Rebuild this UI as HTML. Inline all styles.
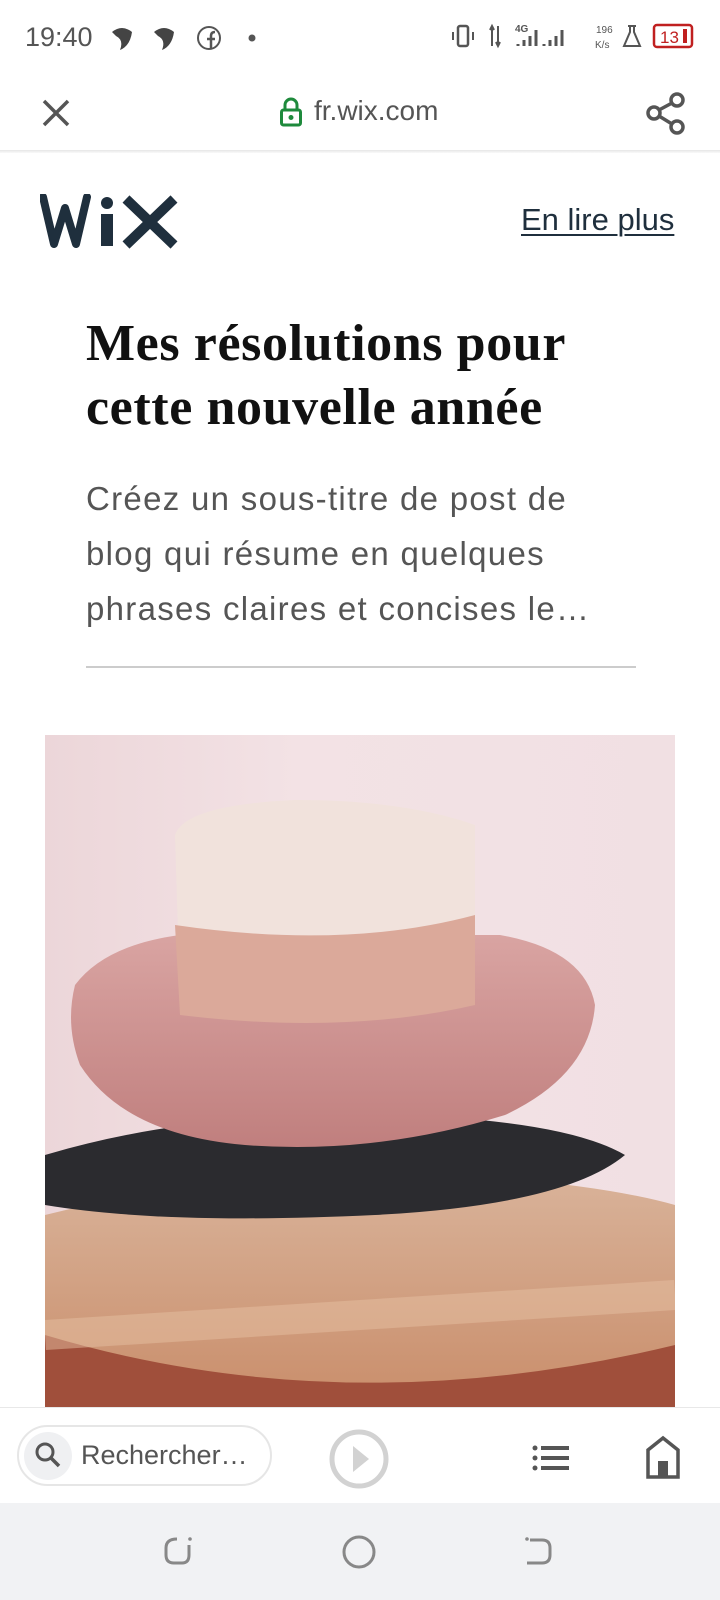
<!DOCTYPE html>
<html><head><meta charset="utf-8"><style>
*{margin:0;padding:0;box-sizing:border-box}
body{width:720px;height:1600px;background:#fff;position:relative;overflow:hidden;font-family:"Liberation Sans",sans-serif}
.abs{position:absolute}
</style></head><body>
<!-- status bar -->
<div class="abs" style="left:25px;top:22px;font-size:27px;color:#555">19:40</div>
<svg class="abs" style="left:108px;top:24px" width="150" height="28" viewBox="0 0 150 28">
<path d="M4 8 Q14 0 24 8 Q22 22 12 26 Q16 16 8 12Z" fill="#444"/>
<path d="M46 8 Q56 0 66 8 Q64 22 54 26 Q58 16 50 12Z" fill="#444"/>
<circle cx="101" cy="14" r="11" fill="none" stroke="#555" stroke-width="2"/>
<path d="M103 25 V12 Q103 8 107 8 M99 15 H107" stroke="#555" stroke-width="2.5" fill="none"/>
<circle cx="144" cy="14" r="3.5" fill="#555"/>
</svg>
<svg class="abs" style="left:450px;top:22px" width="250" height="30" viewBox="0 0 250 30">
<rect x="8" y="4" width="10" height="20" rx="2" fill="none" stroke="#555" stroke-width="2.5"/>
<path d="M3 10v8M23 10v8" stroke="#555" stroke-width="2"/>
<path d="M42 4v20M40 8l2-4 2 4M48 4v20M46 20l2 4 2-4" stroke="#555" stroke-width="2"/>
<text x="65" y="10" font-size="10" fill="#555" font-weight="bold">4G</text>
<path d="M68 24v-2M74 24v-6M80 24v-10M86 24v-16" stroke="#555" stroke-width="3"/>
<path d="M94 24v-2M100 24v-6M106 24v-10M112 24v-16" stroke="#555" stroke-width="3"/>
<text x="146" y="11" font-size="10" fill="#555">196</text><text x="145" y="26" font-size="10" fill="#555">K/s</text>
<path d="M178 4h8M180 4v6l-6 14h16l-6-14v-6" fill="none" stroke="#555" stroke-width="2"/>
<rect x="204" y="3" width="38" height="22" rx="3" fill="none" stroke="#c02020" stroke-width="2.5"/>
<text x="210" y="21" font-size="17" fill="#c02020">13</text><rect x="233" y="7" width="4" height="14" fill="#c02020"/>
</svg>
<!-- toolbar -->
<svg class="abs" style="left:40px;top:97px" width="32" height="32"><path d="M4 4L28 28M28 4L4 28" stroke="#555" stroke-width="3.5"/></svg>
<svg class="abs" style="left:279px;top:96px" width="24" height="32"><path d="M6 14V9a6 6 0 0 1 12 0v5" fill="none" stroke="#1e8a3c" stroke-width="3"/><rect x="2.5" y="14" width="19" height="15" rx="2" fill="none" stroke="#1e8a3c" stroke-width="3"/><circle cx="12" cy="21.5" r="2.5" fill="#1e8a3c"/></svg>
<div class="abs" style="left:314px;top:95px;font-size:28px;color:#555">fr.wix.com</div>
<svg class="abs" style="left:644px;top:90px" width="44" height="46"><circle cx="33" cy="10" r="6" fill="none" stroke="#555" stroke-width="3.5"/><circle cx="10" cy="23" r="6" fill="none" stroke="#555" stroke-width="3.5"/><circle cx="33" cy="37" r="6" fill="none" stroke="#555" stroke-width="3.5"/><path d="M15 20L28 13M15 26L28 34" stroke="#555" stroke-width="3.5"/></svg>
<div class="abs" style="left:0;top:150px;width:720px;height:3px;background:linear-gradient(#e6e6e6,#fafafa)"></div>
<!-- wix logo -->
<svg class="abs" style="left:40px;top:194px" width="142" height="56" viewBox="0 0 142 56">
<path d="M3 3 L14 50 L25 14 L36 50 L47 3" fill="none" stroke="#1f2f3d" stroke-width="8" stroke-linejoin="round" stroke-linecap="round"/>
<circle cx="67" cy="9" r="6" fill="#1f2f3d"/>
<rect x="61" y="20" width="12" height="32" fill="#1f2f3d"/>
<path d="M86 5 L134 51 M134 5 L86 51" stroke="#1f2f3d" stroke-width="10"/>
</svg>
<div class="abs" style="left:521px;top:202px;font-size:31px;color:#1f2f3d;text-decoration:underline;text-underline-offset:4px;text-decoration-thickness:1.5px">En lire plus</div>
<!-- title -->
<div class="abs" style="left:86px;top:312px;font-family:'Liberation Serif',serif;font-weight:bold;font-size:52px;line-height:64px;color:#111;letter-spacing:0.6px">Mes résolutions pour<br>cette nouvelle année</div>
<div class="abs" style="left:86px;top:471px;font-size:33px;line-height:55px;color:#555;letter-spacing:1.3px;width:620px">Créez un sous-titre de post de<br>blog qui résume en quelques<br>phrases claires et concises le…</div>
<div class="abs" style="left:86px;top:666px;width:550px;height:2px;background:#ccc"></div>
<!-- image -->
<div class="abs" style="left:45px;top:735px;width:630px;height:672px;overflow:hidden;background:linear-gradient(90deg,#ecd6d9,#f3e2e5 40%,#f1e0e3)">
<svg width="630" height="672" viewBox="0 0 630 672">
<defs>
<linearGradient id="brim" x1="0" y1="0" x2="0" y2="1"><stop offset="0" stop-color="#d9a4a2"/><stop offset="1" stop-color="#c07f7e"/></linearGradient>
<linearGradient id="straw" x1="0" y1="0" x2="0" y2="1"><stop offset="0" stop-color="#d9b39a"/><stop offset="1" stop-color="#c98d6a"/></linearGradient>
</defs>
<path d="M0 480 Q200 430 420 440 Q560 450 630 470 L630 672 L0 672Z" fill="url(#straw)"/>
<path d="M0 600 Q300 690 630 610 L630 672 L0 672Z" fill="#a04f3b"/>
<path d="M0 420 Q150 375 350 380 Q520 385 580 420 Q520 470 330 480 Q120 490 0 470Z" fill="#2b2b2f"/>
<path d="M30 250 Q60 210 135 200 L455 200 Q540 215 550 270 Q545 340 460 380 Q330 420 200 410 Q80 400 35 330 Q20 290 30 250Z" fill="url(#brim)"/>
<path d="M130 100 Q140 70 250 65 Q360 65 430 90 L430 260 Q300 290 135 265Z" fill="#f1e2dc"/>
<path d="M130 190 Q300 215 430 180 L430 270 Q300 300 135 280Z" fill="#dba99a"/>
<path d="M0 600 L630 560" stroke="#e6c0a2" stroke-width="30" opacity=".5"/>
</svg></div>
<!-- bottom bar -->
<div class="abs" style="left:0;top:1407px;width:720px;height:96px;background:#fff;border-top:1px solid #e8e8e8"></div>
<div class="abs" style="left:17px;top:1425px;width:255px;height:61px;border:2px solid #e6e6e6;border-radius:31px"></div>
<div class="abs" style="left:24px;top:1432px;width:48px;height:48px;border-radius:50%;background:#eff0f2"></div>
<svg class="abs" style="left:33px;top:1440px" width="30" height="30"><circle cx="12" cy="12" r="8" fill="none" stroke="#555" stroke-width="3"/><path d="M18 18L26 26" stroke="#555" stroke-width="3.5"/></svg>
<div class="abs" style="left:81px;top:1440px;font-size:27px;color:#555">Rechercher…</div>
<svg class="abs" style="left:328px;top:1428px" width="62" height="62"><circle cx="31" cy="31" r="27" fill="none" stroke="#d2d2d2" stroke-width="5"/><path d="M25 18L41 31L25 44Z" fill="#d2d2d2"/></svg>
<svg class="abs" style="left:532px;top:1444px" width="40" height="30"><circle cx="3" cy="4" r="2.5" fill="#555"/><circle cx="3" cy="14" r="2.5" fill="#555"/><circle cx="3" cy="24" r="2.5" fill="#555"/><path d="M9 4h28M9 14h28M9 24h28" stroke="#555" stroke-width="4"/></svg>
<svg class="abs" style="left:645px;top:1435px" width="36" height="44"><path d="M3 42V15L18 3L33 15V42Z" fill="none" stroke="#555" stroke-width="3.5"/><rect x="13" y="26" width="10" height="16" fill="#555"/></svg>
<!-- nav -->
<div class="abs" style="left:0;top:1503px;width:720px;height:97px;background:#f1f2f4"></div>
<svg class="abs" style="left:160px;top:1530px" width="400" height="50">
<path d="M17 9 Q6 9 6 18 V25 Q6 33 14 33 H22 Q29 33 29 25 V15" fill="none" stroke="#888" stroke-width="3"/><circle cx="30" cy="9" r="1.8" fill="#888"/>
<ellipse cx="199" cy="22" rx="15" ry="15" fill="none" stroke="#888" stroke-width="3"/>
<path d="M370 10 H382 Q390 10 390 18 V25 Q390 33 382 33 H367" fill="none" stroke="#888" stroke-width="3"/><circle cx="367" cy="9" r="1.8" fill="#888"/>
</svg>
</body></html>
